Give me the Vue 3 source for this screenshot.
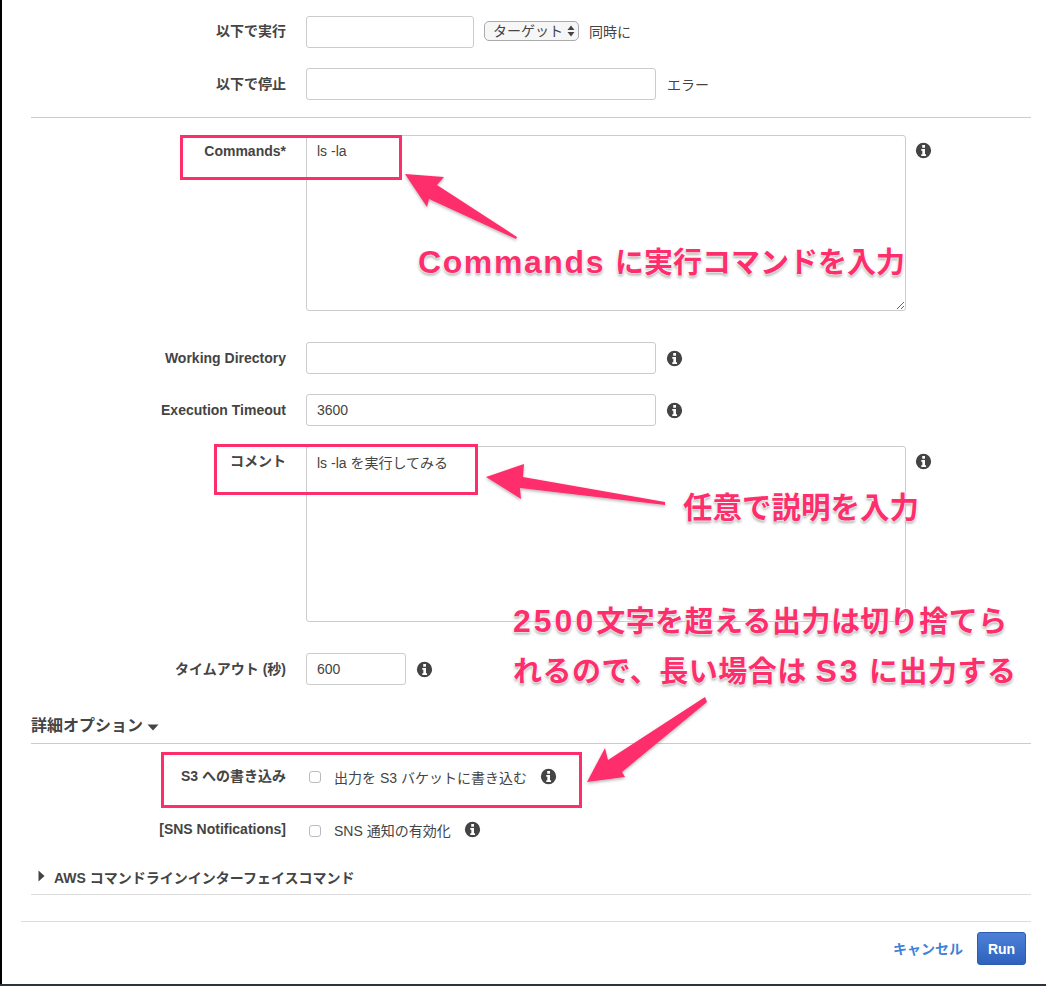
<script setup>
const arrows = [
  { id: 'a1', points: '405,174 444,177 437,185 517,237 516,239 429,199 427,207' },
  { id: 'a2', points: '486,477 524,464 523,477 665,502 665,505 520,488 521,499' },
  { id: 'a3', points: '587,782 605,748 608,760 705,697 707,702 622,772 625,777' }
]
const boxes = [
  { id: 'b1', x: 180, y: 135, w: 222, h: 45 },
  { id: 'b2', x: 214, y: 444, w: 264, h: 51 },
  { id: 'b3', x: 161, y: 752, w: 421, h: 56 }
]
</script>

<template>
  <div class="page">
    <div class="row r1">
      <label class="lab">以下で実行</label>
      <input class="inp short" />
      <span class="sel">ターゲット<svg width="8" height="12" viewBox="0 0 8 12"><path d="M4 0.5 7.5 5H.5zM4 11.5 .5 7h7z" fill="#444"/></svg></span>
      <span class="txt tg">同時に</span>
    </div>
    <div class="row r2">
      <label class="lab">以下で停止</label>
      <input class="inp mid" />
      <span class="txt tg2">エラー</span>
    </div>
    <hr class="hr first" />

    <div class="row r3">
      <label class="lab">Commands*</label>
      <div class="ta">ls -la<svg class="grip" width="8" height="8" viewBox="0 0 8 8"><path d="M1 8 8 1M5 8 8 5" stroke="#666" fill="none"/></svg></div>
      <svg class="info ita" viewBox="0 0 16 16"><use href="#i-info" /></svg>
    </div>
    <div class="row r4">
      <label class="lab">Working Directory</label>
      <input class="inp mid" />
      <svg class="info" viewBox="0 0 16 16"><use href="#i-info" /></svg>
    </div>
    <div class="row r5">
      <label class="lab">Execution Timeout</label>
      <input class="inp mid" value="3600" />
      <svg class="info" viewBox="0 0 16 16"><use href="#i-info" /></svg>
    </div>
    <div class="row r6">
      <label class="lab">コメント</label>
      <div class="ta">ls -la を実行してみる</div>
      <svg class="info ita" viewBox="0 0 16 16"><use href="#i-info" /></svg>
    </div>
    <div class="row r7">
      <label class="lab">タイムアウト (秒)</label>
      <input class="inp tiny" value="600" />
      <svg class="info" viewBox="0 0 16 16"><use href="#i-info" /></svg>
    </div>

    <div class="section">詳細オプション<svg width="12" height="7" viewBox="0 0 12 7"><path d="M0.5 0.5h11L6 6.5z" fill="#444"/></svg></div>

    <div class="row r8">
      <label class="lab">S3 への書き込み</label>
      <span class="cb"></span>
      <span class="txt cbt">出力を S3 バケットに書き込む</span>
      <svg class="info" viewBox="0 0 16 16"><use href="#i-info" /></svg>
    </div>
    <div class="row r9">
      <label class="lab">[SNS Notifications]</label>
      <span class="cb"></span>
      <span class="txt cbt">SNS 通知の有効化</span>
      <svg class="info" viewBox="0 0 16 16"><use href="#i-info" /></svg>
    </div>

    <div class="cli"><svg width="7" height="12" viewBox="0 0 7 12"><path d="M.5.5 6.5 6 .5 11.5z" fill="#444"/></svg><span>AWS コマンドラインインターフェイスコマンド</span></div>

    <div class="footer">
      <a class="cancel">キャンセル</a>
      <button class="run">Run</button>
    </div>

    <svg class="defs" width="0" height="0">
      <symbol id="i-info" viewBox="0 0 16 16">
        <path fill-rule="evenodd" fill="#444" d="M8 .8a7.2 7.2 0 1 1 0 14.4A7.2 7.2 0 0 1 8 .8zM6.8 2.9v2.5h2.6V2.9zM5.9 6.7v1.6h1v3.2h-1v1.6h4.5v-1.6h-1V6.7z"/>
      </symbol>
    </svg>

    <svg class="overlay" width="1046" height="986" viewBox="0 0 1046 986">
      <defs>
        <filter id="sh" x="-20%" y="-20%" width="140%" height="140%">
          <feDropShadow dx="0" dy="1.5" stdDeviation="1.5" flood-color="#000" flood-opacity=".3"/>
        </filter>
      </defs>
      <rect v-for="b in boxes" :key="b.id" :x="b.x + 1.5" :y="b.y + 1.5" :width="b.w - 3" :height="b.h - 3" fill="none" stroke="#fe2e6c" stroke-width="3"/>
      <polygon v-for="a in arrows" :key="a.id" :points="a.points" fill="#fe2e6c" filter="url(#sh)"/>
    </svg>
    <div class="note n1"><span class="lat">Commands</span> に実行コマンドを入力</div>
    <div class="note n2">任意で説明を入力</div>
    <div class="note n3"><span class="lat wide">2500</span>文字を超える出力は切り捨てら</div>
    <div class="note n4">れるので、長い場合は <span class="lat wide">S3</span> に出力する</div>
  </div>
</template>

<style>
html, body { margin: 0; background: #2a3440; }
</style>

<style scoped>
.page {
  position: relative;
  box-sizing: border-box;
  width: 1044px;
  height: 984px;
  margin-left: 2px;
  background: #fff;
  overflow: hidden;
  padding-top: 16px;
  font-family: "Liberation Sans", "Noto Sans CJK JP", sans-serif;
  font-size: 14px;
  color: #444;
  box-shadow: -2px 0 0 #000;
}
.row { display: flex; align-items: flex-start; }
.lab {
  width: 284px;
  flex: none;
  margin-right: 20px;
  box-sizing: border-box;
  text-align: right;
  font-weight: 700;
  line-height: 18px;
  padding-top: 7px;
  white-space: nowrap;
}
.r1 .lab, .r6 .lab { padding-top: 6px; }
.inp {
  box-sizing: border-box;
  height: 32px;
  padding: 0 10px;
  border: 1px solid #ccc;
  border-radius: 3px;
  background: #fff;
  font: 14px "Liberation Sans", "Noto Sans CJK JP", sans-serif;
  color: #444;
  outline: none;
}
.short { width: 168px; }
.mid { width: 350px; }
.tiny { width: 100px; }
.sel {
  box-sizing: border-box;
  margin: 5px 0 0 10px;
  width: 95px;
  height: 20px;
  padding: 0 3px 0 8px;
  display: flex;
  align-items: center;
  justify-content: space-between;
  border: 1px solid #aaa;
  border-radius: 5px;
  background: #f6f6f6;
  font-size: 14px;
  line-height: 18px;
}
.txt { line-height: 18px; white-space: nowrap; }
.tg { margin: 7px 0 0 10px; }
.tg2 { margin: 8px 0 0 11px; }
.hr { border: 0; border-top: 1px solid #ccc; margin: 0 15px 0 29px; }
.first { margin-top: 17px; }
.r2 { margin-top: 20px; }
.r3 { margin-top: 17px; }
.r4 { margin-top: 31px; }
.r5 { margin-top: 20px; }
.r6 { margin-top: 20px; }
.r7 { margin-top: 31px; }
.ta {
  position: relative;
  box-sizing: border-box;
  width: 600px;
  height: 176px;
  padding: 7px 10px;
  border: 1px solid #ccc;
  border-radius: 3px;
  line-height: 18px;
  white-space: pre;
}
.r3 .ta { padding-top: 6px; }
.grip { position: absolute; right: 1px; bottom: 1px; }
.info { width: 17px; height: 17px; margin: 8px 0 0 10px; flex: none; }
.ita { margin: 7px 0 0 9px; }
.section {
  margin: 32px 15px 0 29px;
  height: 26px;
  border-bottom: 1px solid #ccc;
  font-size: 16px;
  font-weight: 700;
  line-height: 18px;
  color: #444;
  display: flex;
  align-items: flex-start;
  gap: 4px;
}
.section svg { margin-top: 7px; }
.r8 { margin-top: 21px; }
.r9 { margin-top: 32px; }
.r8 .lab { padding-top: 2px; }
.r9 .lab { padding-top: 1px; }
.r8 .info { margin: 3px 0 0 13px; }
.r9 .info { margin: 2px 0 0 13px; }
.cb {
  box-sizing: border-box;
  width: 12px;
  height: 12px;
  margin: 6px 0 0 3px;
  border: 1px solid #bbb;
  border-radius: 3px;
  background: #fff;
  flex: none;
}
.cbt { margin: 4px 0 0 13px; }
.r9 .cbt { margin-top: 3px; }
.cli {
  margin: 29px 15px 0 29px;
  height: 25px;
  border-bottom: 1px solid #ddd;
  display: flex;
  align-items: flex-start;
  gap: 9px;
  font-weight: 700;
  line-height: 18px;
}
.cli svg { margin: 1px 0 0 7px; }
.footer {
  margin: 26px 15px 0 19px;
  border-top: 1px solid #ddd;
  display: flex;
  justify-content: flex-end;
  align-items: flex-start;
  padding: 10px 5px 0 0;
}
.cancel { color: #3f82d8; font-weight: 700; margin: 8px 14px 0 0; line-height: 18px; }
.run {
  width: 49px;
  height: 33px;
  border: 1px solid #2a5db0;
  border-radius: 3px;
  background: linear-gradient(#4d80d5, #2f62bd);
  color: #fff;
  font: 700 14px "Liberation Sans", sans-serif;
  padding: 0;
}
.defs { position: absolute; }
.overlay { position: absolute; left: -2px; top: 0; pointer-events: none; }
.note {
  position: absolute;
  color: #fe2e6c;
  font-weight: 700;
  font-size: 29px;
  white-space: nowrap;
  line-height: 40px;
  text-shadow: 0 0 2px #fff, 0 0 2px #fff, 0 0 3px #fff, 0 2px 3px rgba(0,0,0,.45);
}
.lat { font-size: 32px; letter-spacing: 1.6px; }
.n1 .lat { margin-right: 2px; }
.wide { letter-spacing: 3px; }
.n1 { left: 416px; top: 242px; }
.n2 { left: 681px; top: 488px; font-size: 29.5px; }
.n3 { left: 511px; top: 601px; letter-spacing: .45px; }
.n4 { left: 511px; top: 651px; letter-spacing: .5px; }
</style>
